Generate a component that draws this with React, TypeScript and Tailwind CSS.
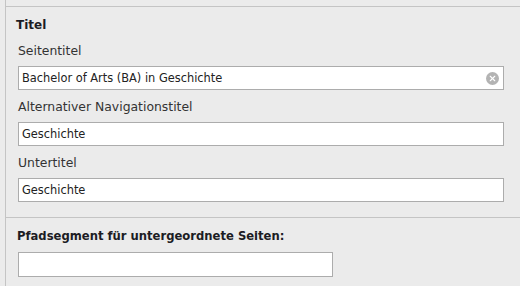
import { X } from "lucide-react";

const font = { fontFamily: '"DejaVu Sans", Verdana, sans-serif' };

function Field({ label, value, clear, first }: { label: string; value: string; clear?: boolean; first?: boolean }) {
  return (
    <div className="flex flex-col">
      <div className={`h-[16px] leading-[16px] text-[12.4px] text-[#333] pl-[12px] ${first ? "mt-[8px]" : "mt-[9px]"}`}>{label}</div>
      <div className="relative ml-[12px] mr-[16px] mt-[7px] h-[24px] border border-[#acacac] bg-white">
        <div className="pl-[3px] leading-[22px] text-[11.4px] text-[#222]">{value}</div>
        {clear && (
          <span className="absolute right-[4px] top-[5px] flex h-[13px] w-[13px] items-center justify-center rounded-full bg-[#b3b3b3]">
            <X size={9} strokeWidth={3} color="#fff" />
          </span>
        )}
      </div>
    </div>
  );
}

export default function App() {
  return (
    <div className="h-[286px] w-[520px] overflow-hidden bg-[#ebebeb] pl-[5px]" style={font}>
      <div className="h-full border-l border-[#c4c4c4]">
        <div className="h-[7px] border-b border-[#c4c4c4]" />
        <div className="h-[211px] border-b border-[#c4c4c4]">
          <div className="pl-[10px] pt-[10px] h-[28px] leading-[16px] text-[12px] font-bold text-[#1c1c24]">Titel</div>
          <Field label="Seitentitel" value="Bachelor of Arts (BA) in Geschichte" clear first />
          <Field label="Alternativer Navigationstitel" value="Geschichte" />
          <Field label="Untertitel" value="Geschichte" />
        </div>
        <div className="pl-[11px] pt-[10px] h-[26px] leading-[16px] text-[11.6px] font-bold text-[#1c1c24]">
          Pfadsegment für untergeordnete Seiten:
        </div>
        <div className="ml-[12px] mt-[8px] h-[25px] w-[315px] border border-[#acacac] bg-white" />
      </div>
    </div>
  );
}
